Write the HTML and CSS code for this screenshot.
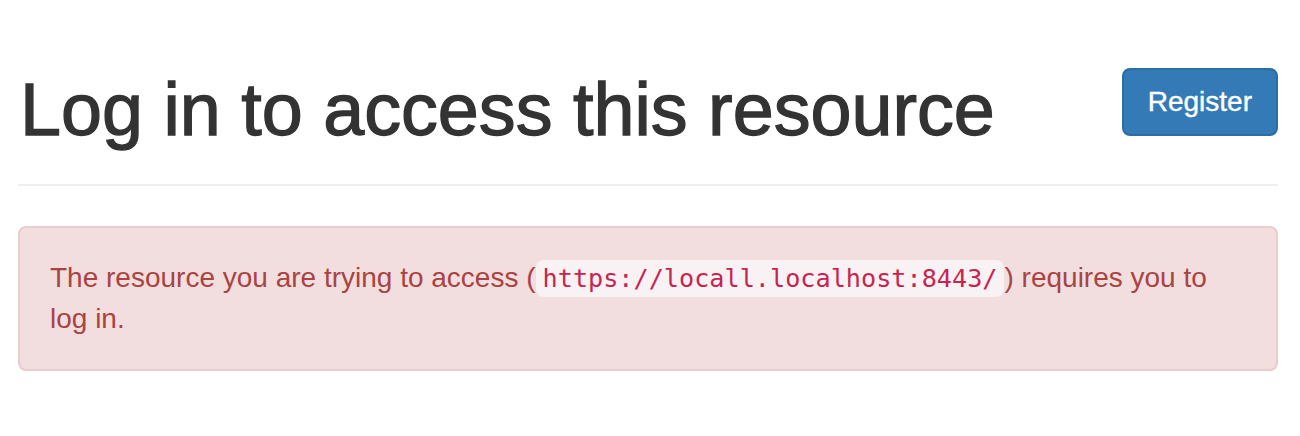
FILE: index.html
```html
<!DOCTYPE html>
<html lang="en">
<head>
  <meta charset="UTF-8">
  <meta name="viewport" content="width=device-width, initial-scale=1.0">
  <title>Log in to access this resource</title>
  <link rel="stylesheet" href="styles.css">
</head>
<body>
  <div class="container">
    <div class="page-header">
      <h1>Log in to access this resource</h1>
      <a class="btn btn-primary" href="#">Register</a>
    </div>

    <div class="alert alert-danger">
      The resource you are trying to access (<code>https://locall.localhost:8443/</code>) requires you to log in.
    </div>
  </div>
</body>
</html>
```

FILE: styles.css
```css
body {
  margin: 0;
  font-family: "Liberation Sans", Arial, sans-serif;
  font-size: 28px;
  line-height: 40px;
  color: #333;
  background: #fff;
}

.container {
  padding: 0 22px 0 18px;
}

.page-header {
  display: flex;
  justify-content: space-between;
  align-items: flex-start;
  padding: 68px 0 35px;
  border-bottom: 2px solid #eee;
}

.page-header h1 {
  margin: 2px 0 0 2px;
  font-size: 73.7px;
  font-weight: 500;
  line-height: 79px;
  color: #333;
  -webkit-text-stroke: 1.3px #333;
}

.btn {
  display: inline-block;
  padding: 12px 24px;
  font-size: 28px;
  line-height: 40px;
  border: 2px solid transparent;
  border-radius: 8px;
  text-decoration: none;
}

.btn-primary {
  color: #fff;
  background: #337ab7;
  border-color: #2e6da4;
  -webkit-text-stroke: 0.4px #fff;
}

.alert {
  margin-top: 40px;
  padding: 30px;
  border: 2px solid transparent;
  border-radius: 8px;
}

.alert-danger {
  color: #a94442;
  background: #f2dede;
  border-color: #ebccd1;
}

code {
  font-family: "DejaVu Sans Mono", "Liberation Mono", monospace;
  font-size: 90%;
  padding: 4px 7px;
  color: #c7254e;
  background: #f9f2f4;
  border-radius: 8px;
}
```
